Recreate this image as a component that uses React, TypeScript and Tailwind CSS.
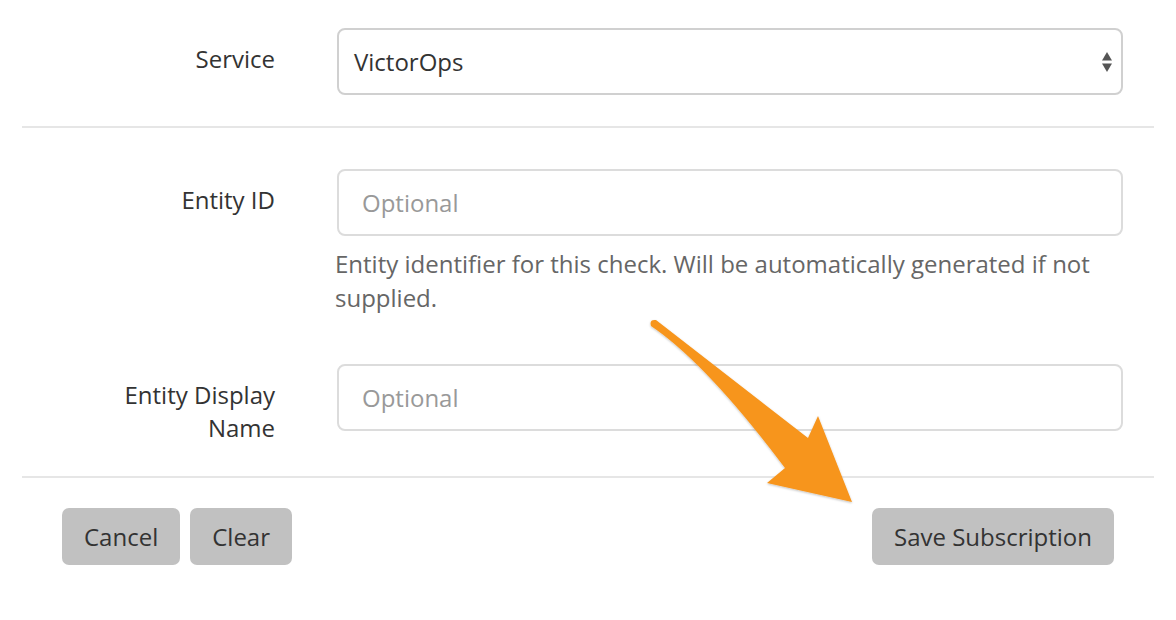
import React from "react";

function SelectArrows() {
  return (
    <svg width="12" height="22" viewBox="0 0 12 22" className="shrink-0">
      <path d="M6 1 L11 9.5 L1 9.5 Z" fill="#555" />
      <path d="M6 21 L11 12.5 L1 12.5 Z" fill="#555" />
    </svg>
  );
}

function Row({ label, children }: { label: React.ReactNode; children: React.ReactNode }) {
  return (
    <div className="flex pr-[31px]">
      <div className="w-[253px] shrink-0 text-right pt-[14px] leading-[33px] text-[#333]">{label}</div>
      <div className="ml-[62px] flex-1">{children}</div>
    </div>
  );
}

export default function App() {
  return (
    <div
      className="relative w-[1176px] h-[620px] bg-white overflow-hidden text-[24px]"
      style={{ fontFamily: '"Open Sans", sans-serif' }}
    >
      <div className="px-[22px] pt-[28px]">
        <Row label="Service">
          <div className="h-[67px] border-2 border-[#d0d0d0] rounded-[8px] flex items-center pl-[15px] pr-[8px] text-[#333]">
            <span className="flex-1">VictorOps</span>
            <SelectArrows />
          </div>
        </Row>
        <div className="mt-[31px] h-[2px] bg-[#e6e6e6]" />
        <div className="pt-[41px]">
          <Row label="Entity ID">
            <div className="h-[67px] border-2 border-[#dcdcdc] rounded-[8px] flex items-center pl-[23px] text-[#999]">
              Optional
            </div>
            <p className="mt-[11px] -ml-[2px] leading-[34px] text-[#666] pr-[20px]">
              Entity identifier for this check. Will be automatically generated if not supplied.
            </p>
          </Row>
        </div>
        <div className="pt-[49px]">
          <div className="flex pr-[31px] h-[67px]">
            <div className="w-[253px] shrink-0 text-right pt-[14px] leading-[33px] text-[#333]">
              Entity Display
              <br />
              Name
            </div>
            <div className="ml-[62px] flex-1">
              <div className="h-[67px] border-2 border-[#dcdcdc] rounded-[8px] flex items-center pl-[23px] text-[#999]">
                Optional
              </div>
            </div>
          </div>
        </div>
        <div className="mt-[45px] h-[2px] bg-[#e6e6e6]" />
        <div className="px-[40px] pt-[30px] flex items-center">
          <button className="h-[57px] px-[22px] rounded-[7px] bg-[#c1c1c1] text-[#333]">Cancel</button>
          <button className="ml-[10px] h-[57px] px-[22px] rounded-[7px] bg-[#c1c1c1] text-[#333]">Clear</button>
          <div className="flex-1" />
          <button className="h-[57px] px-[22px] rounded-[7px] bg-[#c1c1c1] text-[#333]">Save Subscription</button>
        </div>
      </div>

      <svg
        className="absolute left-0 top-0 pointer-events-none"
        width="1176"
        height="620"
        viewBox="0 0 1176 620"
      >
        <defs>
          <filter id="sh" x="-20%" y="-20%" width="140%" height="140%">
            <feDropShadow dx="0" dy="1" stdDeviation="1.2" floodColor="#000" floodOpacity="0.25" />
          </filter>
        </defs>
        <path
          d="M651 326 Q649 319 656 320 L808 438 L818 416 L852 502 L767 483 L785 468 Q706 363 651 326 Z"
          fill="#f7951d"
          filter="url(#sh)"
        />
      </svg>
    </div>
  );
}
